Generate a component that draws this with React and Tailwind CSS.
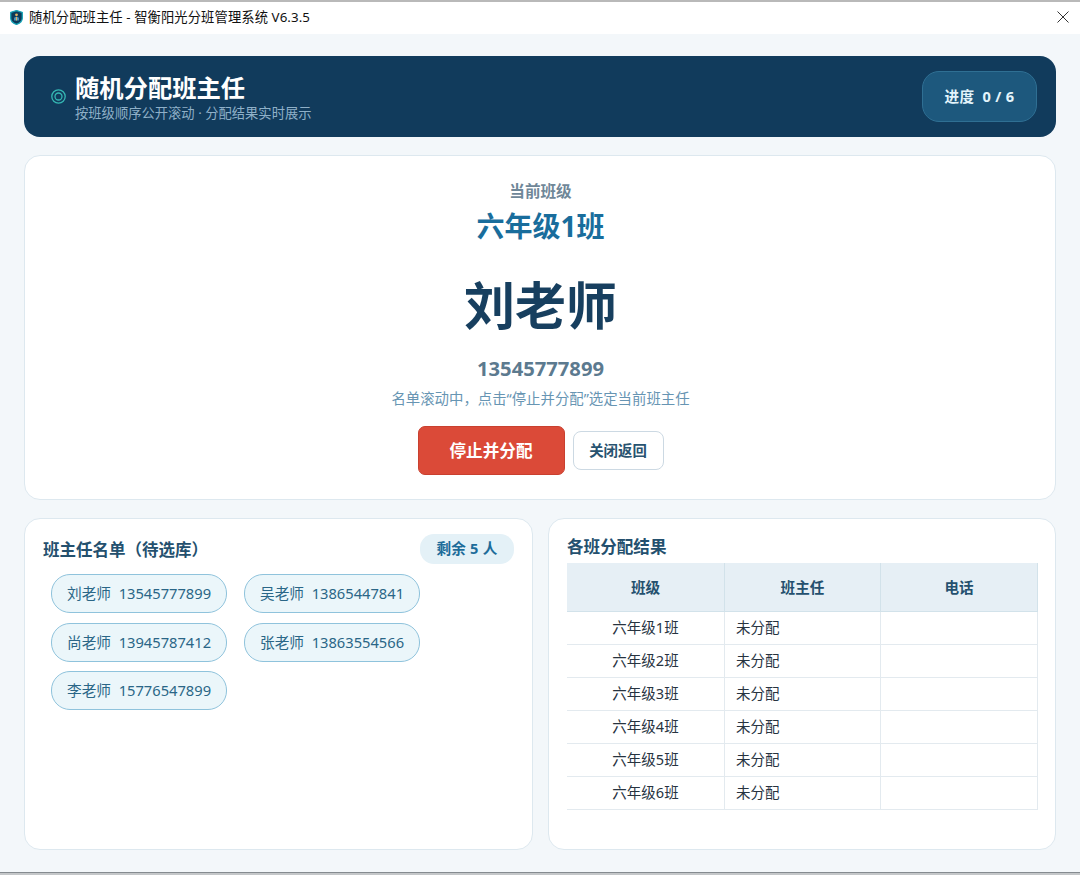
const teachers = [
  ["刘老师", "13545777899"],
  ["吴老师", "13865447841"],
  ["尚老师", "13945787412"],
  ["张老师", "13863554566"],
  ["李老师", "15776547899"],
];

const classes = ["六年级1班", "六年级2班", "六年级3班", "六年级4班", "六年级5班", "六年级6班"];

function ShieldIcon() {
  return (
    <svg width="13" height="15" viewBox="0 0 12 14" className="shrink-0">
      <path d="M6 .5 11.400 2.200v5.400c0 2.800-2.200 4.600-5.400 5.900C2.800 12.200.6 10.400.6 7.600V2.200z" fill="#0b3a5a" stroke="#16a3b6" strokeWidth="1.200" />
      <circle cx="6" cy="4.500" r="1.300" fill="#e0b163" />
      <path d="M3.700 9.800V8c0-1 1-1.700 2.300-1.700S8.300 7 8.300 8v1.800z" fill="#4a94ba" />
      <path d="M6 6.500v3.300" stroke="#e0b163" strokeWidth="1" />
    </svg>
  );
}

function TitleBar() {
  return (
    <div className="flex h-[34px] shrink-0 items-center border-t-2 border-[#b9b9b9] bg-white pr-[11px] pb-[2px] pl-[10px]">
      <ShieldIcon />
      <div className="ml-[6px] text-[13.300px] leading-5 tracking-[0.090px] whitespace-nowrap text-[#111]">随机分配班主任 - 智衡阳光分班管理系统 V6.3.5</div>
      <svg width="12" height="12" viewBox="0 0 12 12" className="ml-auto" fill="none" stroke="#333" strokeWidth="1">
        <path d="M.5.5l11 11M11.500.5l-11 11" />
      </svg>
    </div>
  );
}

function Banner() {
  return (
    <div className="flex h-[81px] shrink-0 items-center rounded-2xl bg-[#113b5c] pr-[19px] pl-[27px]">
      <svg width="15" height="15" viewBox="0 0 15 15" fill="none" stroke="#35b8b4" strokeWidth="1.300">
        <circle cx="7.500" cy="7.500" r="6.700" />
        <circle cx="7.500" cy="7.500" r="3.500" />
      </svg>
      <div className="ml-[9px] flex flex-col">
        <div className="text-[24.300px] leading-[32px] font-bold text-white">随机分配班主任</div>
        <div className="text-[13.300px] leading-[18px] text-[#8fb0c8]">按班级顺序公开滚动 · 分配结果实时展示</div>
      </div>
      <div className="ml-auto flex h-[51px] w-[115px] items-center justify-center rounded-[17px] border border-[#2f6f93] bg-[#1d587d] text-[14.600px] font-bold tracking-[0.300px] whitespace-pre text-[#e3f4fb]">{"进度  0 / 6"}</div>
    </div>
  );
}

function CurrentCard() {
  return (
    <div className="mt-[18px] flex h-[345px] shrink-0 flex-col items-center rounded-2xl border border-[#dde8ef] bg-white pt-[24px] pl-px">
      <div className="text-[15.600px] leading-[22px] font-bold text-[#6f8798]">当前班级</div>
      <div className="mt-[4px] text-[28px] leading-[40px] font-bold text-[#196d9c]">六年级1班</div>
      <div className="mt-[24px] text-[51px] leading-[70px] font-bold text-[#173f5f]">刘老师</div>
      <div className="mt-[14px] text-[20.200px] leading-[28px] font-bold text-[#5c7a8f]">13545777899</div>
      <div className="mt-[5px] text-[14.400px] leading-[24px] text-[#6795b3]">名单滚动中，点击“停止并分配”选定当前班主任</div>
      <div className="mt-[15px] flex items-center gap-2">
        <button className="h-[49px] w-[147px] rounded-[7px] border border-[#c9402f] bg-[#db4a38] pt-[2px] text-[16.600px] font-bold text-white">停止并分配</button>
        <button className="h-[39px] w-[91px] rounded-[8px] border border-[#ccd9e3] bg-white pt-px text-[14.400px] font-bold text-[#285370]">关闭返回</button>
      </div>
    </div>
  );
}

function PoolCard() {
  return (
    <div className="h-[332px] w-[509px] rounded-2xl border border-[#dde8ef] bg-white pt-[15px] pr-[18px] pl-[18px]">
      <div className="flex items-center justify-between">
        <div className="pt-[2px] text-[16.500px] leading-[28px] font-bold text-[#24506e]">班主任名单（待选库）</div>
        <div className="flex h-[30px] w-[94px] items-center justify-center rounded-[14px] bg-[#e4f1f7] text-[14.600px] font-bold tracking-[0.200px] text-[#1d6c9a]">剩余 5 人</div>
      </div>
      <div className="mt-[10px] ml-[8px] grid w-fit grid-cols-[176px_176px] gap-x-[17px] gap-y-[9.500px]">
        {teachers.map(([name, phone]) => (
          <div key={phone} className="flex h-[39px] items-center justify-center rounded-[19px] border border-[#8fc3dc] bg-[#ebf6fa] text-[14.700px] whitespace-pre text-[#2a6687]">{name + "  " + phone}</div>
        ))}
      </div>
    </div>
  );
}

function ResultCard() {
  return (
    <div className="h-[332px] w-[508px] rounded-2xl border border-[#dde8ef] bg-white px-[18px] pt-[15px]">
      <div className="text-[16.600px] leading-[26px] font-bold text-[#24506e]">各班分配结果</div>
      <div className="mt-[3px] grid h-[49px] grid-cols-[158px_156px_157px] bg-[#e6eff5] text-[14.600px] font-bold text-[#24506e]">
        {["班级", "班主任", "电话"].map((label) => (
          <div key={label} className="flex items-center justify-center border-r border-b border-[#d2e2ea] pt-px">{label}</div>
        ))}
      </div>
      {classes.map((name) => (
        <div key={name} className="grid h-[33px] grid-cols-[158px_156px_157px] text-[14.500px] text-[#27333f]">
          <div className="flex items-center justify-center border-r border-b border-[#e3eaef]">{name}</div>
          <div className="flex items-center border-r border-b border-[#e3eaef] pl-[11px]">未分配</div>
          <div className="border-r border-b border-[#e3eaef]" />
        </div>
      ))}
    </div>
  );
}

export default function App() {
  return (
    <div className="flex h-[875px] w-[1080px] flex-col overflow-hidden border-b-2 border-[#c4c7c9] bg-[#f3f7fa] font-['Noto_Sans','Noto_Sans_CJK_SC',sans-serif]">
      <TitleBar />
      <main className="flex flex-1 flex-col border-b border-[#858b90] px-[24px] pt-[22px]">
        <Banner />
        <CurrentCard />
        <div className="mt-[18px] flex gap-[15px]">
          <PoolCard />
          <ResultCard />
        </div>
      </main>
    </div>
  );
}
